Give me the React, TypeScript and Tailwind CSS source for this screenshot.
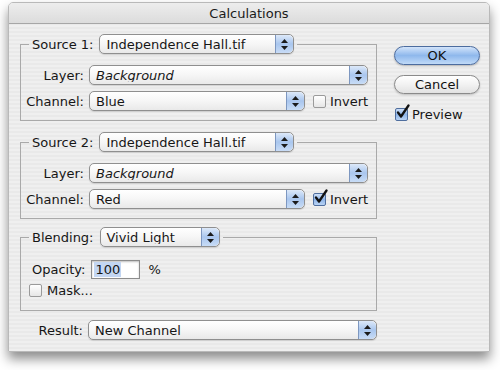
import React from "react"

/* =====================
   SMALL AQUA CONTROLS
===================== */
function Stepper() {
  return (
    <span className="flex h-full w-[18px] shrink-0 flex-col items-center justify-center gap-[3px] rounded-r-[5px] border-l border-[#7d97c0] bg-gradient-to-b from-[#dde9f9] via-[#a9c6ee] to-[#c8dcf6]">
      <svg width="7" height="4" viewBox="0 0 7 4">
        <path d="M3.5 0 L7 4 L0 4 Z" fill="#1b1b1b" />
      </svg>
      <svg width="7" height="4" viewBox="0 0 7 4">
        <path d="M0 0 L7 0 L3.5 4 Z" fill="#1b1b1b" />
      </svg>
    </span>
  )
}

function Popup({
  value,
  width,
  italic,
}: {
  value: string
  width: string
  italic?: boolean
}) {
  return (
    <div
      className={`flex h-[20px] items-center overflow-hidden rounded-[5px] border border-[#8f8f8f] bg-gradient-to-b from-[#ffffff] via-[#f6f6f6] to-[#e9e9e9] shadow-[0_1px_1px_rgba(0,0,0,0.12)] ${width}`}
    >
      <span className={`flex-1 truncate pl-[6px] text-[13px] leading-none text-[#161616] ${italic ? "italic" : ""}`}>
        {value}
      </span>
      <Stepper />
    </div>
  )
}

function Checkbox({ checked }: { checked?: boolean }) {
  return (
    <span className="relative inline-block h-[13px] w-[13px] shrink-0">
      <span
        className={`absolute inset-0 rounded-[2px] border ${
          checked
            ? "border-[#4f6e9e] bg-gradient-to-b from-[#cfe0f7] via-[#8db4e8] to-[#b9d3f4]"
            : "border-[#9a9a9a] bg-gradient-to-b from-[#ffffff] to-[#e6e6e6]"
        }`}
      />
      {checked && (
        <svg
          className="absolute left-[1px] top-[-4px]"
          width="14"
          height="15"
          viewBox="0 0 14 15"
        >
          <path
            d="M2 8.5 L5 12.5 L12.5 1.5"
            fill="none"
            stroke="#111"
            strokeWidth="2.3"
            strokeLinecap="round"
            strokeLinejoin="round"
          />
        </svg>
      )}
    </span>
  )
}

function Label({ children }: { children: React.ReactNode }) {
  return (
    <span className="w-[63px] shrink-0 text-right text-[13px] leading-none text-[#161616]">
      {children}
    </span>
  )
}

/* =====================
   SOURCE GROUP
===================== */
function SourceGroup({
  n,
  channel,
  invert,
}: {
  n: number
  channel: string
  invert?: boolean
}) {
  return (
    <fieldset className="border border-[#a9a9a9] pb-[9px]">
      <legend className="ml-[8px] flex items-center gap-[6px] px-[3px]">
        <span className="text-[13px] leading-none text-[#161616]">Source {n}:</span>
        <Popup value="Independence Hall.tif" width="w-[195px]" />
      </legend>

      <div className="mt-[11px] flex flex-col gap-[6px]">
        <div className="flex items-center gap-[5px]">
          <Label>Layer:</Label>
          <Popup value="Background" width="w-[279px]" italic />
        </div>
        <div className="flex items-center gap-[5px]">
          <Label>Channel:</Label>
          <Popup value={channel} width="w-[216px]" />
          <div className="ml-[3px] flex items-center gap-[4px]">
            <Checkbox checked={invert} />
            <span className="text-[13px] leading-none text-[#161616]">Invert</span>
          </div>
        </div>
      </div>
    </fieldset>
  )
}

/* =====================
   MAIN
===================== */
export default function App() {
  return (
    <div className="h-[370px] w-[500px] overflow-hidden bg-white font-['DejaVu_Sans',sans-serif]">
      <div className="ml-[8px] mt-[2px] flex h-[350px] w-[482px] flex-col overflow-hidden rounded-t-[5px] border border-[#b9b9b9] bg-[repeating-linear-gradient(0deg,#efefef_0px,#efefef_2px,#e9e9e9_2px,#e9e9e9_4px)] shadow-[0_7px_12px_rgba(0,0,0,0.45)]">
        {/* TITLE BAR */}
        <div className="flex h-[21px] shrink-0 items-center justify-center border-b border-[#a6a6a6] bg-gradient-to-b from-[#ededed] to-[#dcdcdc]">
          <span className="text-[13px] leading-none text-[#1a1a1a]">Calculations</span>
        </div>

        <div className="flex">
          {/* LEFT */}
          <div className="ml-[11px] mt-[10px] flex w-[357px] flex-col">
            <SourceGroup n={1} channel="Blue" />
            <div className="mt-[11px]">
              <SourceGroup n={2} channel="Red" invert />
            </div>

            <fieldset className="mt-[8px] border border-[#a9a9a9] pb-[13px]">
              <legend className="ml-[8px] flex items-center gap-[6px] px-[3px]">
                <span className="text-[13px] leading-none text-[#161616]">Blending:</span>
                <Popup value="Vivid Light" width="w-[120px]" />
              </legend>

              <div className="ml-[11px] mt-[13px] flex items-center">
                <span className="text-[13px] leading-none text-[#161616]">Opacity:</span>
                <div className="ml-[6px] flex h-[19px] w-[49px] items-center border border-[#8c8c8c] bg-white shadow-[inset_0_1px_2px_rgba(0,0,0,0.25)]">
                  <span className="ml-[2px] bg-[#c3d6f2] px-[1px] text-[13px] leading-[15px] text-[#161616]">100</span>
                </div>
                <span className="ml-[8px] text-[13px] leading-none text-[#161616]">%</span>
              </div>

              <div className="ml-[8px] mt-[5px] flex items-center gap-[5px]">
                <Checkbox />
                <span className="text-[13px] leading-none text-[#161616]">Mask...</span>
              </div>
            </fieldset>

            <div className="mt-[9px] flex items-center gap-[5px]">
              <span className="w-[63px] shrink-0 text-right text-[13px] leading-none text-[#161616]">Result:</span>
              <Popup value="New Channel" width="w-[289px]" />
            </div>
          </div>

          {/* RIGHT */}
          <div className="ml-[17px] mt-[22px] flex w-[86px] flex-col">
            <button className="flex h-[19px] items-center justify-center rounded-full border border-[#4c6c9f] bg-gradient-to-b from-[#d3e4fa] via-[#8fb8ec] to-[#c0daf8] text-[13px] leading-none text-[#111] shadow-[0_1px_2px_rgba(0,0,0,0.25)]">
              OK
            </button>
            <button className="mt-[10px] flex h-[19px] items-center justify-center rounded-full border border-[#8a8a8a] bg-gradient-to-b from-[#ffffff] via-[#f2f2f2] to-[#e2e2e2] text-[13px] leading-none text-[#111] shadow-[0_1px_2px_rgba(0,0,0,0.2)]">
              Cancel
            </button>
            <div className="ml-[1px] mt-[14px] flex items-center gap-[4px]">
              <Checkbox checked />
              <span className="text-[13px] leading-none text-[#161616]">Preview</span>
            </div>
          </div>
        </div>
      </div>
    </div>
  )
}
